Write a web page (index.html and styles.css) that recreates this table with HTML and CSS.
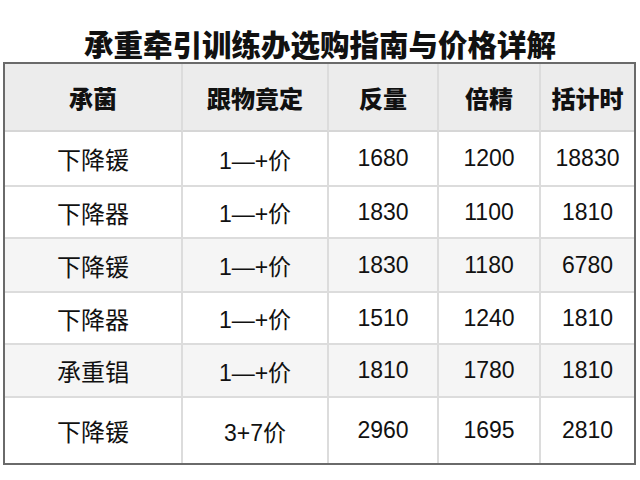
FILE: index.html
```html
<!DOCTYPE html>
<html lang="zh-CN">
<head>
<meta charset="utf-8">
<title>承重牵引训练办选购指南与价格详解</title>
<link rel="stylesheet" href="styles.css">
</head>
<body>
<h1 class="title">承重牵引训练办选购指南与价格详解</h1>
<div class="table">
  <div class="cell head">承菌</div>
  <div class="cell head">跟物竟定</div>
  <div class="cell head">反量</div>
  <div class="cell head">倍精</div>
  <div class="cell head last">括计时</div>

  <div class="cell r1">下降锾</div>
  <div class="cell r1 num">1—+价</div>
  <div class="cell r1 num">1680</div>
  <div class="cell r1 num">1200</div>
  <div class="cell r1 num last">18830</div>

  <div class="cell r2">下降器</div>
  <div class="cell r2 num">1—+价</div>
  <div class="cell r2 num">1830</div>
  <div class="cell r2 num">1100</div>
  <div class="cell r2 num last">1810</div>

  <div class="cell r3 alt">下降锾</div>
  <div class="cell r3 alt num">1—+价</div>
  <div class="cell r3 alt num">1830</div>
  <div class="cell r3 alt num">1180</div>
  <div class="cell r3 alt num last">6780</div>

  <div class="cell r4">下降器</div>
  <div class="cell r4 num">1—+价</div>
  <div class="cell r4 num">1510</div>
  <div class="cell r4 num">1240</div>
  <div class="cell r4 num last">1810</div>

  <div class="cell r5 alt">承重锠</div>
  <div class="cell r5 alt num">1—+价</div>
  <div class="cell r5 alt num">1810</div>
  <div class="cell r5 alt num">1780</div>
  <div class="cell r5 alt num last">1810</div>

  <div class="cell r6 bottom">下降锾</div>
  <div class="cell r6 bottom num">3+7价</div>
  <div class="cell r6 bottom num">2960</div>
  <div class="cell r6 bottom num">1695</div>
  <div class="cell r6 bottom num last">2810</div>
</div>
</body>
</html>
```
FILE: styles.css
```css
html, body {
  margin: 0;
  padding: 0;
  background: #ffffff;
}

body {
  font-family: "Liberation Sans", "Noto Sans CJK SC", sans-serif;
  color: #111111;
}

.title {
  margin: 0 0 1px 0;
  padding-top: 25px;
  height: 36px;
  line-height: 36px;
  font-family: "Noto Sans CJK SC", sans-serif;
  font-size: 29.5px;
  font-weight: 900;
  text-align: center;
  color: #111111;
}

.table {
  margin-left: 3px;
  width: 633px;
  box-sizing: border-box;
  border: 2px solid #6a6a6a;
  display: grid;
  grid-template-columns: 178px 146px 110px 102px 93px;
  grid-template-rows: 68px 55px 52px 54px 52px 53px 65px;
}

.cell {
  box-sizing: border-box;
  border-right: 2px solid #dcdcdc;
  border-bottom: 2px solid #dcdcdc;
  display: flex;
  align-items: center;
  justify-content: center;
  font-family: "Noto Sans CJK SC", sans-serif;
  font-size: 24px;
  background: #ffffff;
}

.cell.num {
  font-family: "Liberation Sans", "Noto Sans CJK SC", sans-serif;
  font-size: 23px;
}

.cell.head {
  background: #ececec;
  font-weight: 900;
  font-size: 24px;
  border-bottom-color: #d6d6d6;
}

.cell.alt {
  background: #f5f5f5;
}

.cell.last {
  border-right: none;
}

.cell.bottom {
  border-bottom: none;
}
```
